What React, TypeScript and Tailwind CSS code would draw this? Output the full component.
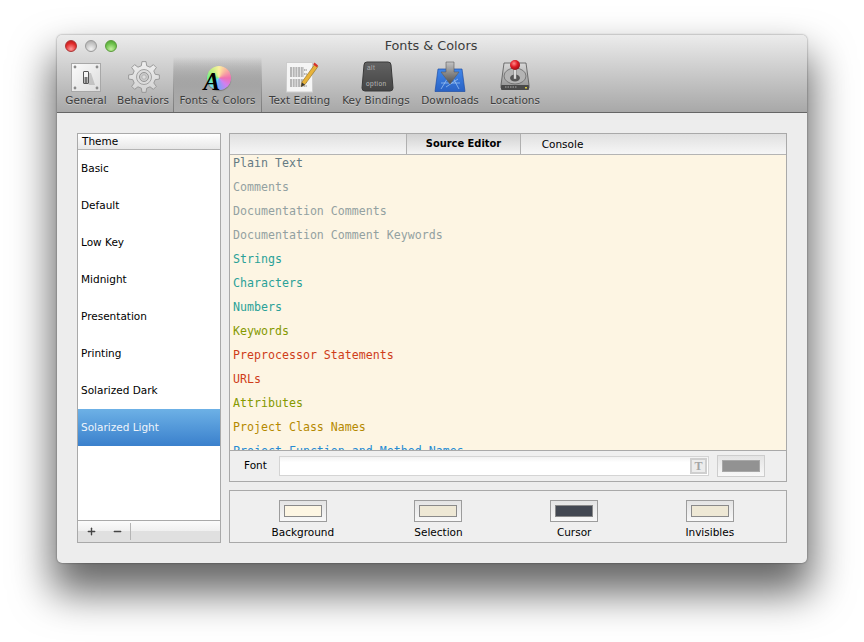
import type { ReactNode } from 'react';
import { Minus, Plus } from 'lucide-react';

const themes = ['Basic', 'Default', 'Low Key', 'Midnight', 'Presentation', 'Printing', 'Solarized Dark', 'Solarized Light'];

const syntaxRows = [
    { label: 'Plain Text', color: 'text-[#657b83]' },
    { label: 'Comments', color: 'text-[#93a1a1]' },
    { label: 'Documentation Comments', color: 'text-[#93a1a1]' },
    { label: 'Documentation Comment Keywords', color: 'text-[#93a1a1]' },
    { label: 'Strings', color: 'text-[#2aa198]' },
    { label: 'Characters', color: 'text-[#2aa198]' },
    { label: 'Numbers', color: 'text-[#2aa198]' },
    { label: 'Keywords', color: 'text-[#859900]' },
    { label: 'Preprocessor Statements', color: 'text-[#cf3d1a]' },
    { label: 'URLs', color: 'text-[#cf3d1a]' },
    { label: 'Attributes', color: 'text-[#859900]' },
    { label: 'Project Class Names', color: 'text-[#b58900]' },
    { label: 'Project Function and Method Names', color: 'text-[#268bd2]' },
];

const wells = [
    { label: 'Background', color: 'bg-[#fdf6e3]' },
    { label: 'Selection', color: 'bg-[#eee8d5]' },
    { label: 'Cursor', color: 'bg-[#434852]' },
    { label: 'Invisibles', color: 'bg-[#eee8d5]' },
];

// 8 tooth gear outline around the middle of a 44x34 box
function gearPath() {
    const pts: string[] = [];
    const teeth = 8;
    for (let i = 0; i < teeth; i++) {
        const a = (i / teeth) * Math.PI * 2;
        const step = (Math.PI * 2) / teeth;
        const corners = [
            [11.5, a - step * 0.3],
            [15.5, a - step * 0.17],
            [15.5, a + step * 0.17],
            [11.5, a + step * 0.3],
        ];
        corners.forEach(([r, t]) => {
            pts.push(`${(23 + r * Math.sin(t)).toFixed(2)},${(18 - r * Math.cos(t)).toFixed(2)}`);
        });
    }
    return `M${pts.join('L')}Z`;
}

function SwitchIcon() {
    return (
        <svg width="44" height="34" viewBox="0 0 44 34">
            <defs>
                <linearGradient id="plate" x1="0" y1="0" x2="1" y2="1">
                    <stop offset="0" stopColor="#fbfbfb" />
                    <stop offset="1" stopColor="#dcdcdc" />
                </linearGradient>
            </defs>
            <rect x="7.5" y="4.5" width="29" height="28" fill="url(#plate)" stroke="#a8a8a8" />
            <path d="M22 14h5l4 12h-6z" fill="#8f8f8f" opacity="0.4" />
            <rect x="19.5" y="12.5" width="5" height="12" rx="0.5" fill="#f4f4f4" stroke="#555" />
            <rect x="20.5" y="18" width="3" height="6" fill="#777" />
            <circle cx="11" cy="8" r="1.4" fill="#8c8c8c" />
            <circle cx="33" cy="8" r="1.4" fill="#8c8c8c" />
            <circle cx="11" cy="29" r="1.4" fill="#8c8c8c" />
            <circle cx="33" cy="29" r="1.4" fill="#8c8c8c" />
        </svg>
    );
}

function GearIcon() {
    return (
        <svg width="44" height="34" viewBox="0 0 44 34">
            <defs>
                <linearGradient id="gear" x1="0" y1="0" x2="0" y2="1">
                    <stop offset="0" stopColor="#f0f0f0" />
                    <stop offset="1" stopColor="#d2d2d2" />
                </linearGradient>
            </defs>
            <path d={gearPath()} fill="url(#gear)" stroke="#949494" strokeWidth="0.9" strokeLinejoin="round" />
            <circle cx="23" cy="18" r="7.5" fill="#dcdcdc" stroke="#a2a2a2" />
            <circle cx="23" cy="18" r="4.5" fill="#cbcbcb" stroke="#969696" />
            <circle cx="23" cy="18" r="2.2" fill="#dedede" stroke="#a6a6a6" strokeWidth="0.7" />
        </svg>
    );
}

function ColorWheelIcon() {
    return (
        <div className="relative h-[34px] w-[44px]">
            <div className="absolute top-[7px] left-[11px] h-[24px] w-[24px] rounded-full bg-[conic-gradient(#fdf0a0,#f8b0a0,#f070b0,#d080f0,#80a0f8,#70e0f0,#70f090,#c0f080,#fdf0a0)] shadow-[0_1px_1px_rgba(0,0,0,0.3)]" />
            <span className="absolute top-[9px] left-[8px] font-['Liberation_Serif',serif] text-[25px] leading-[28px] font-bold text-black italic">A</span>
        </div>
    );
}

function PaperIcon() {
    const lines = [9, 11, 13, 15, 17, 21, 23, 25, 27];
    return (
        <svg width="44" height="34" viewBox="0 0 44 34">
            <rect x="8.5" y="3.5" width="26" height="29.5" fill="#f5f5f5" stroke="#cdcdcd" />
            {lines.map((y) => (
                <path key={y} d={`M12 ${y}h${y % 4 === 1 ? 14 : 17}`} stroke="#777" strokeWidth="1" strokeDasharray="2 0.7" />
            ))}
            <path d="M37 5l3 2.5-13 18-4 2 1-4.5z" fill="#e8b33a" stroke="#8a6a20" strokeWidth="0.6" />
            <path d="M36.5 3.5l3.5 3-1.3 1.8-3.5-2.8z" fill="#d6322c" />
            <path d="M24 23.5l3 2.3-4 2z" fill="#3a3a3a" />
        </svg>
    );
}

function KeyIcon() {
    return (
        <svg width="44" height="34" viewBox="0 0 44 34">
            <defs>
                <linearGradient id="key" x1="0" y1="0" x2="0" y2="1">
                    <stop offset="0" stopColor="#626262" />
                    <stop offset="1" stopColor="#444" />
                </linearGradient>
            </defs>
            <path d="M10 6q0-3 3-3h21q3 0 3 3l2 23q0 3-3 3H11q-3 0-3-3z" fill="url(#key)" stroke="#3a3a3a" />
            <text x="13" y="10.5" fontSize="6.5" letterSpacing="0.5" fill="#b0b0b0" fontFamily="Liberation Sans, sans-serif">alt</text>
            <text x="12" y="26.5" fontSize="6.5" letterSpacing="0.5" fill="#bcbcbc" fontFamily="Liberation Sans, sans-serif">option</text>
        </svg>
    );
}

function DownloadIcon() {
    return (
        <svg width="44" height="34" viewBox="0 0 44 34">
            <defs>
                <linearGradient id="tile" x1="0" y1="0" x2="0" y2="1">
                    <stop offset="0" stopColor="#3f86ea" />
                    <stop offset="1" stopColor="#2a62c4" />
                </linearGradient>
                <linearGradient id="arrow" x1="0" y1="0" x2="0" y2="1">
                    <stop offset="0" stopColor="#c4c4c4" />
                    <stop offset="1" stopColor="#4e4e4e" />
                </linearGradient>
            </defs>
            <path d="M10 10h24l3 22.5H7z" fill="url(#tile)" stroke="#1f4fa5" strokeWidth="0.7" />
            <path d="M13 30L21 17M31 30L24 17M13 24H32M18 28l12-8" stroke="#a9ccf6" strokeWidth="0.8" fill="none" opacity="0.85" />
            <path d="M18 3h8v10h5l-9 12-9-12h5z" fill="url(#arrow)" stroke="#5c5c5c" strokeWidth="0.6" />
        </svg>
    );
}

function JoystickIcon() {
    return (
        <svg width="44" height="34" viewBox="0 0 44 34">
            <defs>
                <linearGradient id="drive" x1="0" y1="0" x2="0" y2="1">
                    <stop offset="0" stopColor="#d8d8d8" />
                    <stop offset="1" stopColor="#929292" />
                </linearGradient>
                <radialGradient id="ball" cx="0.4" cy="0.35" r="0.7">
                    <stop offset="0" stopColor="#ff8a8a" />
                    <stop offset="0.5" stopColor="#e01a24" />
                    <stop offset="1" stopColor="#8c0d14" />
                </radialGradient>
            </defs>
            <path d="M11 4h22l3 22v3H8v-3z" fill="url(#drive)" stroke="#555" strokeWidth="0.8" />
            <rect x="8" y="26" width="28" height="5" rx="1" fill="#4a4a4a" />
            <path d="M12 28h12" stroke="#aaa" strokeDasharray="1.5 1" />
            <rect x="32" y="28" width="2" height="1.5" fill="#d8c840" />
            <ellipse cx="22" cy="17" rx="11" ry="8" fill="#b4b4b4" stroke="#5e5e5e" strokeWidth="0.7" />
            <ellipse cx="22" cy="19" rx="5" ry="3.5" fill="#555" />
            <rect x="20.8" y="8" width="2.4" height="12" fill="#d9d9d9" stroke="#666" strokeWidth="0.4" />
            <circle cx="22" cy="6" r="5" fill="url(#ball)" />
        </svg>
    );
}

const toolbarItems: { label: string; width: string; icon: ReactNode; selected?: boolean }[] = [
    { label: 'General', width: 'w-[54px]', icon: <SwitchIcon /> },
    { label: 'Behaviors', width: 'w-[60px]', icon: <GearIcon /> },
    { label: 'Fonts & Colors', width: 'w-[89px]', icon: <ColorWheelIcon />, selected: true },
    { label: 'Text Editing', width: 'w-[75px]', icon: <PaperIcon /> },
    { label: 'Key Bindings', width: 'w-[78px]', icon: <KeyIcon /> },
    { label: 'Downloads', width: 'w-[70px]', icon: <DownloadIcon /> },
    { label: 'Locations', width: 'w-[60px]', icon: <JoystickIcon /> },
];

function ToolbarItem({ label, width, icon, selected }: { label: string; width: string; icon: ReactNode; selected?: boolean }) {
    const inner = (
        <div className={`flex h-full flex-col items-center ${selected ? 'bg-gradient-to-b from-transparent via-[#a6a6a6] via-60% to-[#acacac]' : ''}`}>
            <div className="mt-[2px] flex h-[34px] items-center justify-center">{icon}</div>
            <span className="text-[10.5px] leading-[14px] whitespace-nowrap text-[#3c3c3c] [text-shadow:0_1px_0_rgba(255,255,255,0.35)]">{label}</span>
        </div>
    );
    if (selected) {
        return <div className={`${width} bg-gradient-to-b from-transparent to-[#7c7c7c] px-px`}>{inner}</div>;
    }
    return <div className={width}>{inner}</div>;
}

function ColorWell({ color, disabled }: { color: string; disabled?: boolean }) {
    return (
        <div className={`flex h-[22px] w-[48px] items-center justify-center border bg-gradient-to-b from-[#e4e4e4] to-[#f8f8f8] ${disabled ? 'border-[#cdcdcd]' : 'border-[#9c9c9c]'}`}>
            <div className={`h-[12px] w-[38px] border ${disabled ? 'border-[#a8a8a8]' : 'border-[#8a8a8a]'} ${color}`} />
        </div>
    );
}

export default function App() {
    return (
        <div className="h-[642px] w-[864px] overflow-hidden bg-white pt-[35px] pl-[57px] font-['DejaVu_Sans',sans-serif]">
            <div className="flex h-[528px] w-[750px] flex-col overflow-hidden rounded-[5px] bg-[#ededed] shadow-[0_25px_40px_5px_rgba(0,0,0,0.6),0_0_2px_rgba(0,0,0,0.5)]">
                <div className="flex h-[78px] flex-col border-b border-[#666] bg-gradient-to-b from-[#ececec] to-[#a8a8a8]">
                    <div className="flex h-[22px] items-center">
                        <div className="flex w-[64px] items-center gap-2 pl-2">
                            <span className="h-3 w-3 shrink-0 rounded-full border border-[#a33] bg-[radial-gradient(circle_at_50%_80%,#ff9a9a,#e02a2a_60%,#b01818)]" />
                            <span className="h-3 w-3 shrink-0 rounded-full border border-[#999] bg-[radial-gradient(circle_at_50%_80%,#f2f2f2,#c4c4c4_60%,#a6a6a6)]" />
                            <span className="h-3 w-3 shrink-0 rounded-full border border-[#5a9a3a] bg-[radial-gradient(circle_at_50%_80%,#c4f0a0,#6cc04a_60%,#4a9a30)]" />
                        </div>
                        <div className="flex-1 pr-[2px] text-center text-[12.8px] leading-none text-[#3c3c3c]">
                            <span className="-ml-[64px]">Fonts &amp; Colors</span>
                        </div>
                    </div>
                    <div className="flex h-[55px] pl-[2px]">
                        {toolbarItems.map((item) => (
                            <ToolbarItem key={item.label} {...item} />
                        ))}
                    </div>
                </div>

                <div className="flex gap-2 px-5 pt-5">
                    <div className="flex h-[410px] w-[144px] flex-col border border-[#a9a9a9] bg-white">
                        <div className="h-[16px] border-b border-[#b4b4b4] bg-gradient-to-b from-white to-[#e8e8e8] pl-[4px] text-[10.5px] leading-[14px] text-black">Theme</div>
                        <div className="flex-1">
                            {themes.map((theme) => (
                                <div
                                    key={theme}
                                    className={`flex h-[37px] items-center pl-[3px] text-[10.5px] ${theme === 'Solarized Light' ? 'bg-gradient-to-b from-[#6db1e6] to-[#3a80cc] text-[#eef4fa]' : 'text-black'}`}
                                >
                                    {theme}
                                </div>
                            ))}
                        </div>
                        <div className="flex h-[22px] items-center border-t border-[#a9a9a9] bg-[linear-gradient(#fbfbfb,#efefef_50%,#e0e0e0_50%)] pl-[8px]">
                            <Plus size={11} strokeWidth={3} className="text-[#444]" />
                            <Minus size={11} strokeWidth={3} className="ml-[15px] text-[#444]" />
                            <div className="ml-[7px] h-[17px] w-px bg-[#b4b4b4]" />
                        </div>
                    </div>

                    <div className="flex w-[558px] flex-col gap-2">
                        <div className="flex h-[349px] flex-col border border-[#a9a9a9] bg-[#efefef]">
                            <div className="flex h-[21px] border-b border-[#b4b4b4] bg-gradient-to-b from-[#e0e0e0] to-[#f6f6f6] text-[10.5px] text-black">
                                <div className="w-[176px]" />
                                <div className="flex w-[115px] items-center justify-center border-x border-[#b0b0b0] bg-gradient-to-b from-[#d2d2d2] to-[#f4f4f4] pt-px text-[9.9px] font-bold">Source Editor</div>
                                <div className="flex w-[83px] items-center justify-center pt-px">Console</div>
                            </div>
                            <div className="h-[296px] overflow-hidden border-b border-[#a9a9a9] bg-[#fdf5e3] pl-[3px] font-['DejaVu_Sans_Mono',monospace] text-[11.62px]">
                                <div className="-mt-[3px]">
                                    {syntaxRows.map((row) => (
                                        <div key={row.label} className={`flex h-6 items-center ${row.color}`}>{row.label}</div>
                                    ))}
                                </div>
                            </div>
                            <div className="flex flex-1 items-center text-[10.5px] text-black">
                                <span className="w-[49px] pl-[14px]">Font</span>
                                <div className="flex h-[20px] w-[430px] items-center justify-end border border-[#d4d4d4] bg-gradient-to-b from-[#f2f2f2] to-white to-30% pr-px">
                                    <span className="flex h-[16px] w-[17px] items-center justify-center border-2 border-[#cfcfcf] bg-[#ececec] font-['Liberation_Serif',serif] text-[12px] leading-none font-bold text-[#a4a4a4]">T</span>
                                </div>
                                <div className="ml-2">
                                    <ColorWell color="bg-[#929292]" disabled />
                                </div>
                            </div>
                        </div>

                        <div className="flex h-[53px] border border-[#a9a9a9] bg-[#efefef] pt-[9px] pl-[5px]">
                            {wells.map((well) => (
                                <div key={well.label} className="flex w-[135.67px] flex-col items-center">
                                    <ColorWell color={well.color} />
                                    <span className="mt-[3px] text-[10.5px] leading-[14px] text-black">{well.label}</span>
                                </div>
                            ))}
                        </div>
                    </div>
                </div>
            </div>
        </div>
    );
}
